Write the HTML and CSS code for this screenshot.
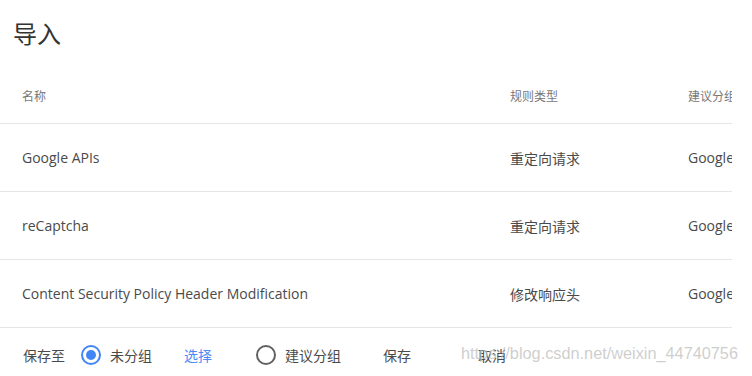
FILE: index.html
```html
<!DOCTYPE html>
<html lang="zh-CN">
  <head>
    <meta charset="UTF-8" />
    <meta name="viewport" content="width=device-width, initial-scale=1.0" />
    <title>导入</title>
    <link rel="stylesheet" href="styles.css">
  </head>
  <body>
    <div class="page">
      <h2 class="title">导入</h2>

      <div class="table">
        <div class="row head">
          <div class="cell name">名称</div>
          <div class="cell type">规则类型</div>
          <div class="cell group">建议分组</div>
        </div>
        <div class="row">
          <div class="cell name">Google APIs</div>
          <div class="cell type">重定向请求</div>
          <div class="cell group">Google</div>
        </div>
        <div class="row">
          <div class="cell name">reCaptcha</div>
          <div class="cell type">重定向请求</div>
          <div class="cell group">Google</div>
        </div>
        <div class="row">
          <div class="cell name">Content Security Policy Header Modification</div>
          <div class="cell type">修改响应头</div>
          <div class="cell group">Google</div>
        </div>
      </div>

      <div class="footer">
        <span class="save-to">保存至</span>
        <label class="option">
          <span class="radio checked"></span>
          <span>未分组</span>
        </label>
        <a class="pick">选择</a>
        <label class="option">
          <span class="radio"></span>
          <span>建议分组</span>
        </label>
        <button class="btn save">保存</button>
        <button class="btn cancel">取消</button>
      </div>
    </div>
    <span class="watermark">https://blog.csdn.net/weixin_44740756</span>
  </body>
</html>
```

FILE: styles.css
```css
body {
    margin: 0;
    background-color: #fff;
    font-family: "Open Sans", "Noto Sans CJK SC", sans-serif;
    color: #4a4a4a;
    position: relative;
}

.page {
    width: 732px;
    overflow: hidden;
}

.title {
    margin: 0 0 18px 0;
    padding: 18px 0 0 13px;
    font-size: 24px;
    line-height: 32px;
    font-weight: normal;
    color: #333;
}

.row {
    display: grid;
    grid-template-columns: 510px 178px 200px;
    box-sizing: border-box;
    height: 68px;
    align-items: center;
    border-bottom: 1px solid #e6e6e6;
    font-size: 14px;
    white-space: nowrap;
}

.row.head {
    height: 56px;
    font-size: 12px;
    color: #777;
}

.cell.name {
    padding-left: 22px;
}

.footer {
    display: flex;
    align-items: center;
    height: 54px;
    padding-left: 23px;
    font-size: 14px;
}

.save-to {
    margin-right: 16px;
}

.option {
    display: flex;
    align-items: center;
    gap: 9px;
}

.radio {
    width: 20px;
    height: 20px;
    box-sizing: border-box;
    border: 2px solid #616161;
    border-radius: 50%;
    position: relative;
}

.radio.checked {
    border-color: #4285f4;
}

.radio.checked::after {
    content: "";
    position: absolute;
    left: 3px;
    top: 3px;
    width: 10px;
    height: 10px;
    border-radius: 50%;
    background-color: #4285f4;
}

.pick {
    color: #4a8af4;
    margin: 0 44px 0 32px;
}

.btn {
    border: none;
    background: none;
    padding: 0;
    font: inherit;
    color: #4a4a4a;
}

.save {
    margin-left: 42px;
}

.cancel {
    margin-left: 67px;
}

.watermark {
    position: absolute;
    left: 461px;
    top: 344px;
    font-family: "Liberation Sans", sans-serif;
    font-size: 16.3px;
    color: rgba(190, 190, 190, 0.75);
    white-space: nowrap;
}
```
